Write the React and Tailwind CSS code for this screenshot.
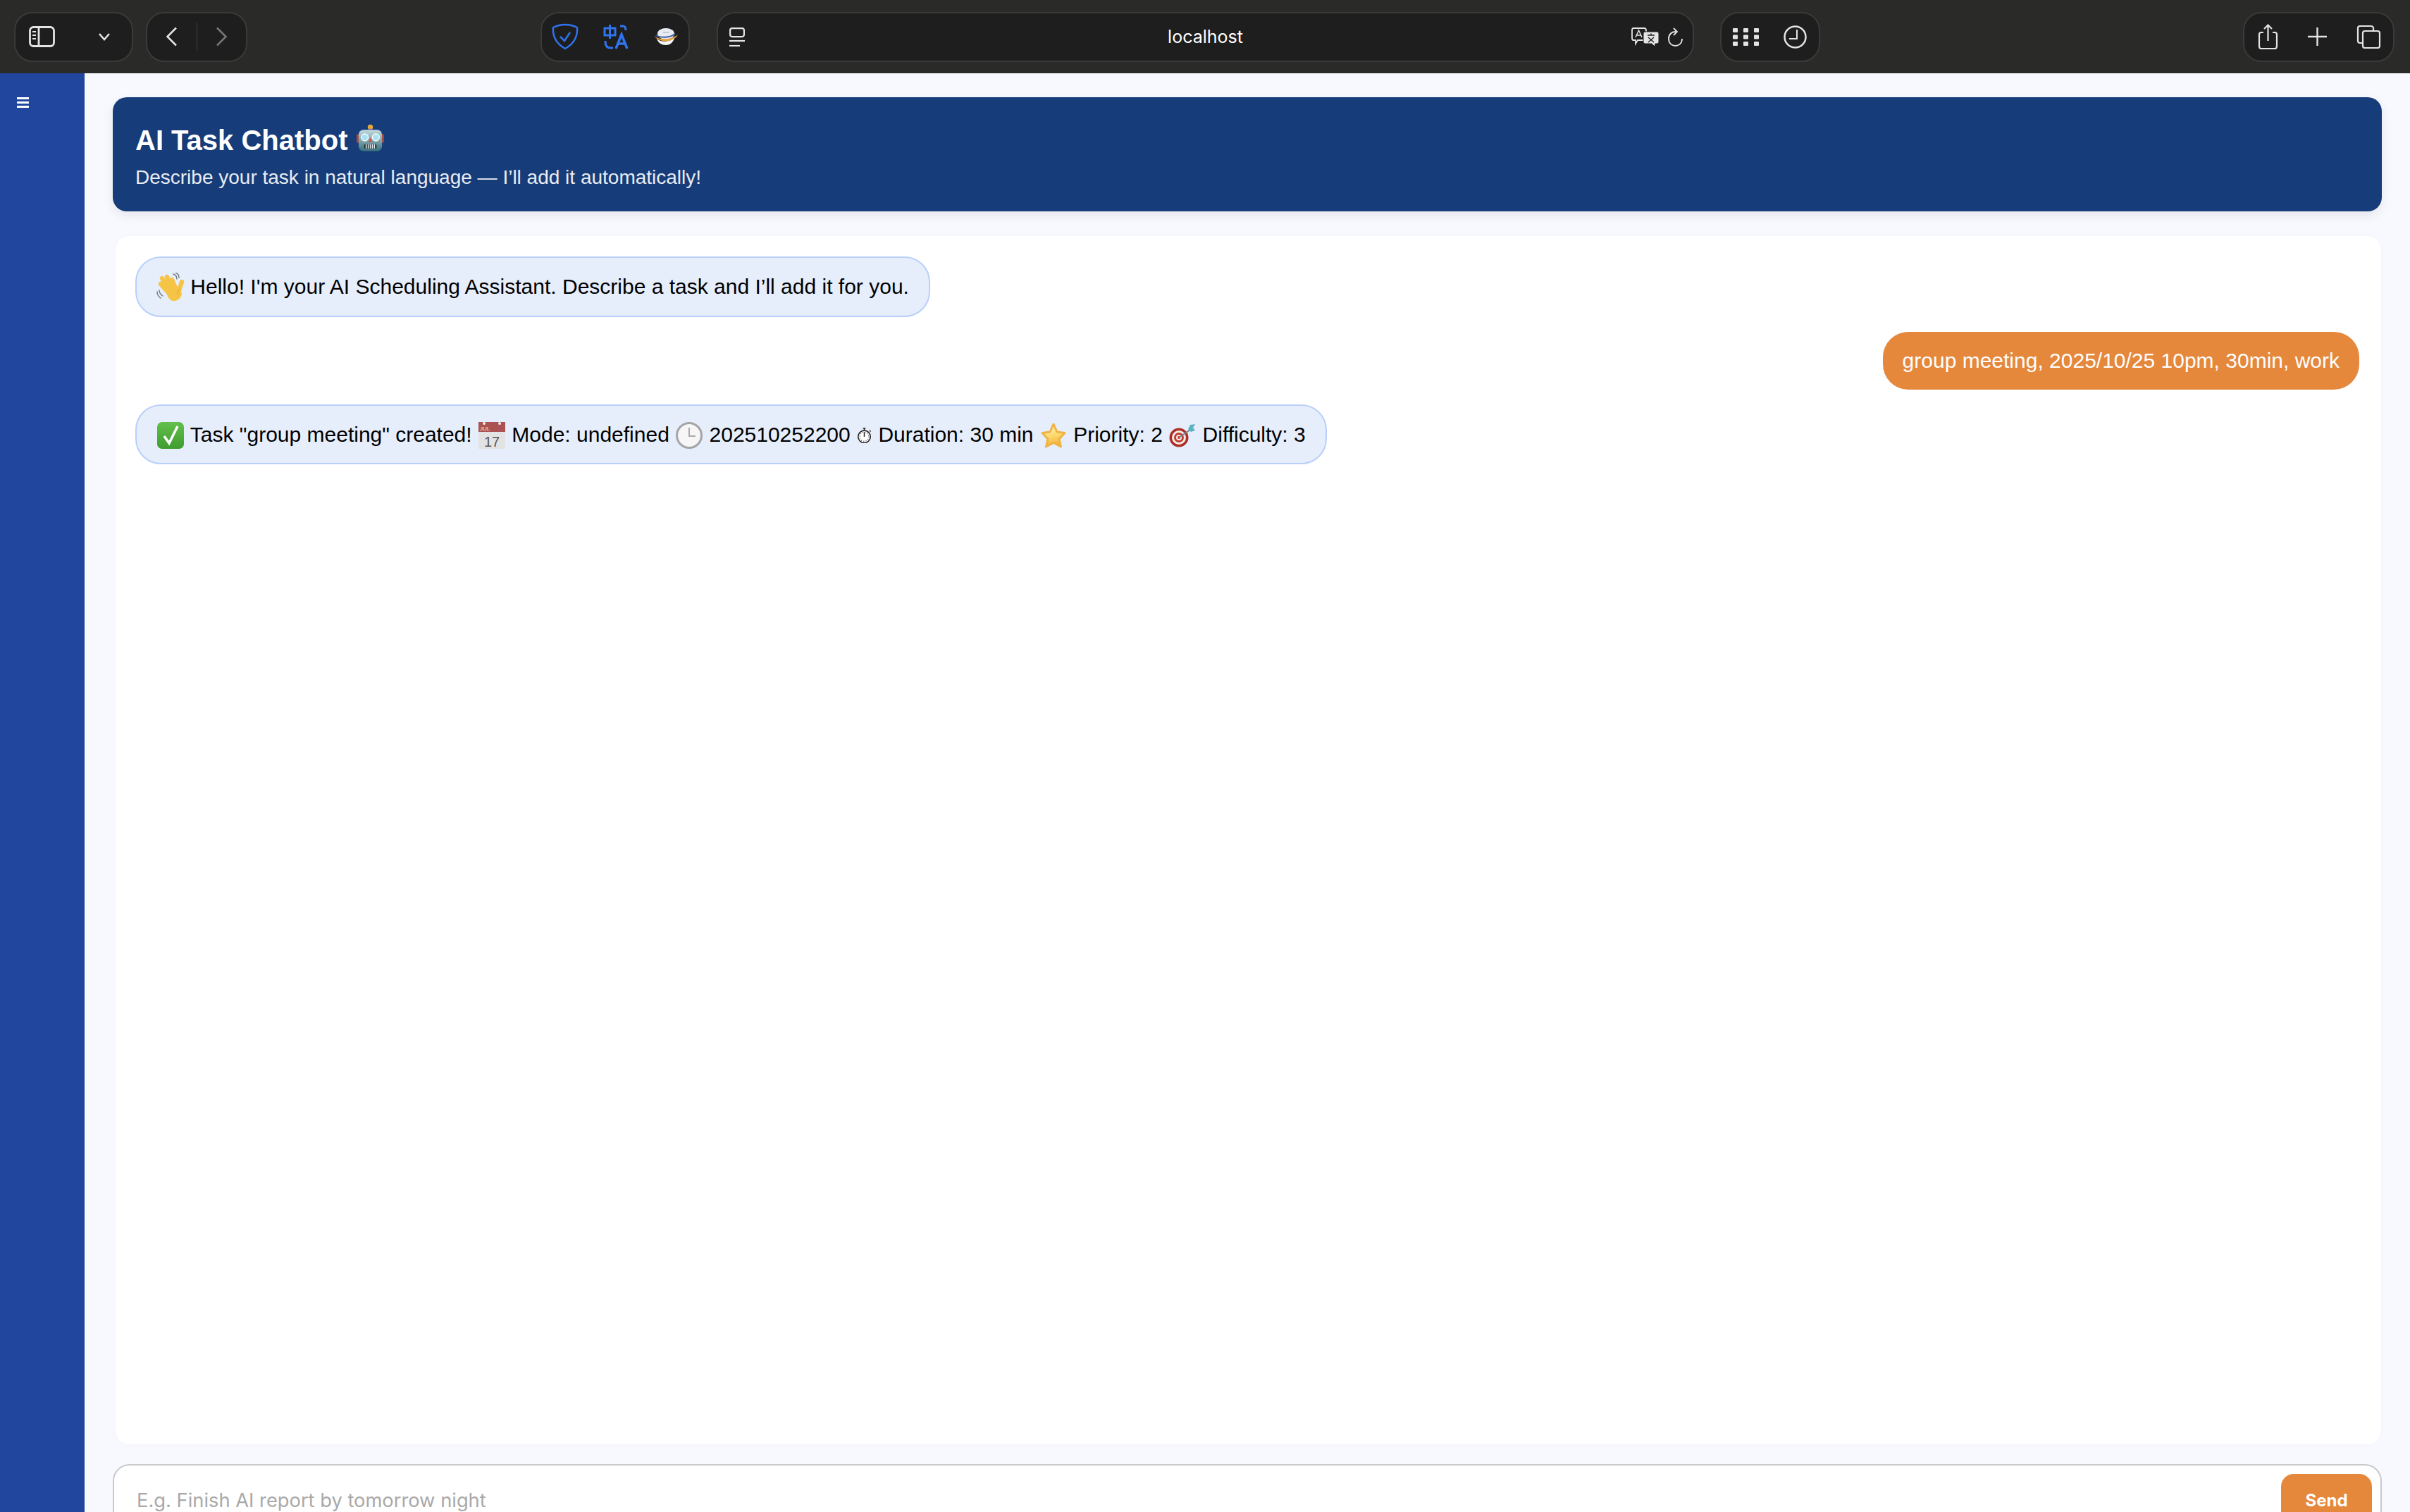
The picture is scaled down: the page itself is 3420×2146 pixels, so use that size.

const Pill = ({ className, children }) => (
  <div className={`flex h-[71px] shrink-0 items-center rounded-[26px] border-2 border-[#3a3a39] bg-[#1e1e1e] ${className}`}>{children}</div>
);

const Wave = () => (
  <svg viewBox="0 0 40 42" className="inline-block h-[42px] w-[40px] align-[-12px]">
    <g stroke="#f6c445" strokeWidth="6.4" strokeLinecap="round" fill="none">
      <path d="M16 27 L6 16" />
      <path d="M18 23 L8 8" />
      <path d="M22 21 L15 6" />
      <path d="M27 22 L22 10" />
      <path d="M31 28 L36 13" />
    </g>
    <path d="M14 27 L33 20 L36 30 C35 37 29 41 23 40 C18 39 15 33 14 27 Z" fill="#f6c445" />
    <path d="M29 32 C30 28 31 26 33 23" stroke="#e2a52c" strokeWidth="1" fill="none" />
    <g stroke="#6f7a80" strokeWidth="1.4" fill="none" strokeLinecap="round">
      <path d="M24 2 C27 3 29 6 29 9" />
      <path d="M27 0 C30 1 32 4 32 7" />
      <path d="M1 27 C1 31 3 34 6 36" />
      <path d="M4 25 C4 28 6 31 9 33" />
    </g>
  </svg>
);
const Check = () => (
  <svg viewBox="0 0 38 38" className="inline-block h-[38px] w-[40px] align-[-10px]">
    <defs>
      <linearGradient id="chk" x1="0" y1="0" x2="0" y2="1">
        <stop offset="0" stopColor="#63c04a" />
        <stop offset="1" stopColor="#3f9c30" />
      </linearGradient>
    </defs>
    <rect x="0" y="0" width="38" height="38" rx="7" fill="url(#chk)" />
    <path d="M10 20 L17 30 L29 6" stroke="#fff" strokeWidth="3.5" fill="none" />
  </svg>
);
const Calendar = () => (
  <svg viewBox="0 0 38 38" className="inline-block h-[38px] w-[40px] align-[-10px]">
    <rect width="38" height="38" fill="#e3e3e3" />
    <rect width="38" height="14" fill="#ab5353" />
    <circle cx="8" cy="2" r="2" fill="#eee" />
    <circle cx="30" cy="2" r="2" fill="#eee" />
    <text x="2" y="12" fontSize="8" fill="#eed" fontFamily="Liberation Sans, sans-serif">JUL</text>
    <text x="19" y="35" textAnchor="middle" fontSize="20" fill="#555" fontFamily="Liberation Sans, sans-serif">17</text>
  </svg>
);
const Clock = () => (
  <svg viewBox="0 0 38 38" className="inline-block h-[38px] w-[40px] align-[-10px]">
    <circle cx="19" cy="19" r="17.5" fill="#f6f6f6" stroke="#a5a5a5" strokeWidth="3" />
    <path d="M19 8 V20 H28" stroke="#aaa" strokeWidth="2" fill="none" />
  </svg>
);
const Stopwatch = () => (
  <svg viewBox="0 0 24 24" className="inline-block h-[22px] w-[23px] align-[-2px]">
    <path d="M10 1 H14 M12 1 V4 M20 4 L22 6" stroke="#222" strokeWidth="1.6" fill="none" />
    <circle cx="12" cy="14" r="9.5" fill="#fff" stroke="#222" strokeWidth="1.8" />
    <path d="M12 14 V7" stroke="#222" strokeWidth="1.6" />
    <circle cx="12" cy="14" r="7" fill="none" stroke="#222" strokeWidth="1.4" strokeDasharray="1 2.66" />
  </svg>
);
const Star = () => (
  <svg viewBox="0 0 38 38" className="inline-block h-[38px] w-[40px] align-[-10px]">
    <defs>
      <linearGradient id="st" x1="0.3" y1="0" x2="0.5" y2="1">
        <stop offset="0" stopColor="#fff6c0" />
        <stop offset="0.55" stopColor="#fbd869" />
        <stop offset="1" stopColor="#f3ab33" />
      </linearGradient>
    </defs>
    <path d="M19 3 L24 14 L35 15.500 L27 24 L29.500 35 L19 29.500 L8.500 35 L11 24 L3 15.500 L14 14 Z" fill="url(#st)" stroke="#f0b345" strokeLinejoin="round" strokeWidth="3" />
  </svg>
);
const Target = () => (
  <svg viewBox="0 0 38 38" className="inline-block h-[38px] w-[40px] align-[-10px]">
    <circle cx="14" cy="22" r="13.500" fill="#ae2f28" />
    <circle cx="14" cy="22" r="10" fill="#f3eee9" />
    <circle cx="14" cy="22" r="7" fill="#c63a32" />
    <circle cx="14" cy="22" r="4" fill="#f3eee9" />
    <circle cx="14" cy="22" r="2" fill="#c63a32" />
    <path d="M14 22 L30 11" stroke="#6d8a90" strokeWidth="2" />
    <path d="M27 10 L30 4 L37 3 L34 8 L37 12 L31 14 Z" fill="#5cb2c2" />
  </svg>
);
const Robot = () => (
  <svg viewBox="0 0 42 40" className="inline-block h-[40px] w-[41px] align-[-3px]">
    <defs>
      <linearGradient id="rb" x1="0" y1="0" x2="0" y2="1">
        <stop offset="0" stopColor="#c3dade" />
        <stop offset="1" stopColor="#37707c" />
      </linearGradient>
    </defs>
    <circle cx="21" cy="4" r="3.800" fill="#e9a83b" />
    <rect x="18" y="6.500" width="6" height="2" fill="#6d5fa8" />
    <rect x="1" y="14" width="5" height="13" rx="2" fill="#a8453c" />
    <rect x="36" y="14" width="5" height="13" rx="2" fill="#a8453c" />
    <rect x="4" y="8" width="34" height="31" rx="7" fill="url(#rb)" />
    <circle cx="13" cy="19" r="5" fill="#a7e0ee" stroke="#f2fbff" strokeWidth="1.6" />
    <circle cx="29" cy="19" r="5" fill="#a7e0ee" stroke="#f2fbff" strokeWidth="1.6" />
    <path d="M21 19 L24 26 H18 Z" fill="#d2574e" />
    <rect x="12" y="29" width="18" height="6" rx="1.500" fill="#223036" />
    <path d="M15 29 V35 M18 29 V35 M21 29 V35 M24 29 V35 M27 29 V35" stroke="#e6ecee" strokeWidth="1.6" />
  </svg>
);

const AiBubble = ({ children }) => (
  <div className="w-fit rounded-[36px] border-2 border-[#b9cffa] bg-[#e6eefc] px-[28px] py-[19px] text-[30px] leading-[43px] whitespace-nowrap text-black">{children}</div>
);

export default function App() {
  return (
    <div className="flex h-[2146px] w-[3420px] flex-col overflow-hidden bg-[#f8f9fe] font-['Liberation_Sans',Arial,sans-serif]">
      <header className="flex h-[104px] shrink-0 items-center bg-[#2a2a29] pr-[22px] pl-[20px] text-[#e4e4e4]">
        <Pill className="w-[169px] justify-between pr-[30px] pl-[19px]">
          <svg viewBox="0 0 37 30" className="h-[30px] w-[37px]" fill="none" stroke="#e4e4e4" strokeWidth="2.800">
            <rect x="1.500" y="1.500" width="34" height="27" rx="5" />
            <path d="M14 1.500 V28.500" />
            <path d="M5 8 H10 M5 13 H10 M5 18 H10" strokeWidth="2" />
          </svg>
          <svg viewBox="0 0 18 12" className="h-[12px] w-[18px]" fill="none" stroke="#e4e4e4" strokeWidth="2.500">
            <path d="M2 2 L9 10 L16 2" />
          </svg>
        </Pill>
        <Pill className="ml-[18px] w-[144px] justify-between px-[26px]">
          <svg viewBox="0 0 17 28" className="h-[28px] w-[17px]" fill="none" stroke="#e4e4e4" strokeWidth="2.500">
            <path d="M15 1.500 L2.500 14 L15 26.500" />
          </svg>
          <div className="h-[40px] w-[1px] bg-[#3e3e3d]" />
          <svg viewBox="0 0 17 28" className="h-[28px] w-[17px]" fill="none" stroke="#777" strokeWidth="2.500">
            <path d="M2 1.500 L14.500 14 L2 26.500" />
          </svg>
        </Pill>
        <Pill className="ml-[416px] w-[212px] justify-between px-[14px]">
          <svg viewBox="0 0 38 38" className="h-[38px] w-[38px]" fill="none" stroke="#2f74ee" strokeWidth="2.500">
            <path d="M19 2 C25 2 31 3.500 36 6 C37 20 30 30 19 36 C8 30 1 20 2 6 C7 3.500 13 2 19 2 Z" />
            <path d="M12 19 L18 25 L26 13" />
          </svg>
          <svg viewBox="0 0 37 36" className="h-[36px] w-[37px]" fill="none" stroke="#2f74ee" strokeWidth="3">
            <path d="M2 6 H17 V16 H2 Z M9.500 1 V21" />
            <path d="M24 3 H28 C31 3 32 5 32 9" />
            <path d="M3 24 C3 30 5 34 10 34 H14" />
            <path d="M18 35 L26 15 L34 35 M21 28 H31" strokeWidth="3.500" />
          </svg>
          <svg viewBox="0 0 36 24" className="h-[24px] w-[36px]">
            <ellipse cx="18" cy="8" rx="12" ry="8" fill="#e8ecf2" />
            <path d="M14 6 H22" stroke="#b4bcc8" strokeWidth="1.500" />
            <path d="M1 11 C8 17 26 17 35 9 C30 20 10 22 1 11 Z" fill="#e8a33f" />
            <path d="M4 10 C10 14 24 14 31 8" stroke="#3d5f9e" strokeWidth="2" fill="none" />
            <path d="M5 15 C10 20 24 20 30 14 C28 21 23 24 18 24 C12 24 7 21 5 15 Z" fill="#f6f6f6" />
          </svg>
        </Pill>
        <Pill className="relative ml-[38px] w-[1387px] pr-[13px] pl-[16px]">
          <svg viewBox="0 0 22 27" className="h-[27px] w-[22px]" fill="none" stroke="#e4e4e4" strokeWidth="2.200">
            <rect x="1.100" y="1.100" width="19.800" height="12" rx="3" />
            <path d="M0 19 H22" />
            <path d="M0 26 H15" />
          </svg>
          <span className="absolute inset-x-0 text-center font-['Inter',sans-serif] text-[25px] leading-none text-white">localhost</span>
          <div className="ml-auto flex items-center gap-[12px]">
            <svg viewBox="0 0 39 27" className="h-[27px] w-[39px]">
              <path d="M3 1 H18 C20 1 21 2 21 4 V15 C21 17 20 18 18 18 H9 L6 23 V18 H3 C1.500 18 1 17 1 15 V4 C1 2 1.500 1 3 1 Z" fill="none" stroke="#e4e4e4" strokeWidth="1.800" />
              <path d="M6 14 L10.500 4 L15 14 M7.500 11 H13.500" stroke="#e4e4e4" strokeWidth="1.500" fill="none" />
              <path d="M20 6 H36 C38 6 39 7 39 9 V20 C39 22 38 23 36 23 H34 L33 27 L29 23 H20 C18 23 17 22 17 20 V9 C17 7 18 6 20 6 Z" fill="#e4e4e4" stroke="#1e1e1e" strokeWidth="1" />
              <path d="M23 11 H33 M28 8.500 V11 M24 21 L32 14 M32 21 L24 14" stroke="#1e1e1e" strokeWidth="1.500" />
            </svg>
            <svg viewBox="0 0 23 27" className="h-[27px] w-[23px]" fill="none" stroke="#e4e4e4" strokeWidth="1.800">
              <path d="M12 6 C6 6 2 10 2 16 C2 22 6 26 11.500 26 C17 26 21 22 21 16" />
              <path d="M9 1 L14 6 L9 11" />
            </svg>
          </div>
        </Pill>
        <Pill className="ml-[37px] w-[142px] justify-between pr-[17px] pl-[16px]">
          <svg viewBox="0 0 37 25" className="h-[25px] w-[37px]" fill="#e4e4e4">
            <rect x="0" y="0" width="7" height="6" rx="1" />
            <rect x="15" y="0" width="7" height="6" rx="1" />
            <rect x="30" y="0" width="7" height="6" rx="1" />
            <rect x="0" y="9.500" width="7" height="6" rx="1" />
            <rect x="15" y="9.500" width="7" height="6" rx="1" />
            <rect x="30" y="9.500" width="7" height="6" rx="1" />
            <rect x="0" y="19" width="7" height="6" rx="1" />
            <rect x="15" y="19" width="7" height="6" rx="1" />
            <rect x="30" y="19" width="7" height="6" rx="1" />
          </svg>
          <svg viewBox="0 0 33 33" className="h-[33px] w-[33px]" fill="none" stroke="#e4e4e4" strokeWidth="2.500">
            <circle cx="16.500" cy="16.500" r="15" />
            <path d="M19 6 V19 H8" strokeWidth="2" />
          </svg>
        </Pill>
        <Pill className="ml-auto w-[215px] justify-between pr-[17px] pl-[19px]">
          <svg viewBox="0 0 29 36" className="h-[36px] w-[29px]" fill="none" stroke="#e4e4e4" strokeWidth="2.200">
            <path d="M8 12 H5 C3 12 2 13 2 15 V31 C2 33 3 35 5 35 H24 C26 35 27 33 27 31 V15 C27 13 26 12 24 12 H21" />
            <path d="M14.500 24 V2 M9 7 L14.500 1.500 L20 7" />
          </svg>
          <svg viewBox="0 0 27 26" className="h-[26px] w-[27px]" fill="none" stroke="#e4e4e4" strokeWidth="2.400">
            <path d="M13.500 0 V26 M0 13 H27" />
          </svg>
          <svg viewBox="0 0 35 34" className="h-[34px] w-[35px]" fill="none" stroke="#e4e4e4" strokeWidth="2.200">
            <path d="M8 26 H5 C3 26 2 25 2 23 V5 C2 3 3 2 5 2 H20 C22 2 24 3 24 5 V8" />
            <rect x="9" y="9" width="24" height="24" rx="3" />
          </svg>
        </Pill>
      </header>

      <div className="flex min-h-0 flex-1">
        <aside className="w-[120px] shrink-0 bg-[#20469d] pt-[34px] pl-[24px] text-[#fff]">
          <div className="flex w-[17px] flex-col gap-[3px]">
            <div className="h-[3px] bg-white" />
            <div className="h-[3px] bg-white" />
            <div className="h-[3px] bg-white" />
          </div>
        </aside>
        <main className="flex min-w-0 flex-1 flex-col pt-[34px] pr-[40px] pl-[40px]">
          <div className="h-[162px] shrink-0 rounded-[20px] bg-[#163c79] px-[32px] pt-[35px] text-white shadow-[0_6px_16px_rgba(0,0,0,0.08)]">
            <h1 className="text-[40px] leading-[52px] font-bold">AI Task Chatbot <Robot /></h1>
            <p className="mt-[8px] text-[28px] leading-[38px] text-[#e9ecf2]">Describe your task in natural language — I’ll add it automatically!</p>
          </div>
          <section className="mt-[35px] mr-[1px] ml-[4px] flex h-[1715px] shrink-0 flex-col gap-[21px] rounded-[20px] bg-white pt-[29px] pr-[31px] pl-[28px] shadow-[0_0_8px_rgba(0,0,0,0.02)]">
            <AiBubble><Wave /> Hello! I'm your AI Scheduling Assistant. Describe a task and I’ll add it for you.</AiBubble>
            <div className="w-fit self-end rounded-[36px] bg-[#e5883c] px-[28px] py-[19px] text-[30px] leading-[44px] whitespace-nowrap text-white">group meeting, 2025/10/25 10pm, 30min, work</div>
            <AiBubble><Check /> Task "group meeting" created! <Calendar /> Mode: undefined <Clock /> 202510252200 <Stopwatch /> Duration: 30 min <Star /> Priority: 2 <Target /> Difficulty: 3</AiBubble>
          </section>
          <form className="mt-[28px] flex h-[110px] shrink-0 items-start rounded-[24px] border-2 border-[#c9c9cc] bg-white pt-[12px] pr-[12px] pl-[32px]">
            <input readOnly placeholder="E.g. Finish AI report by tomorrow night" className="mt-[20px] min-w-0 flex-1 bg-transparent font-['Inter',sans-serif] text-[27.3px] leading-[36px] outline-none placeholder:text-[#a9a9a9]" />
            <button type="button" className="h-[90px] w-[129px] rounded-[18px] bg-[#e5883c] pb-[14px] font-['Inter',sans-serif] text-[24px] leading-none font-bold text-white">Send</button>
          </form>
        </main>
      </div>
    </div>
  );
}
